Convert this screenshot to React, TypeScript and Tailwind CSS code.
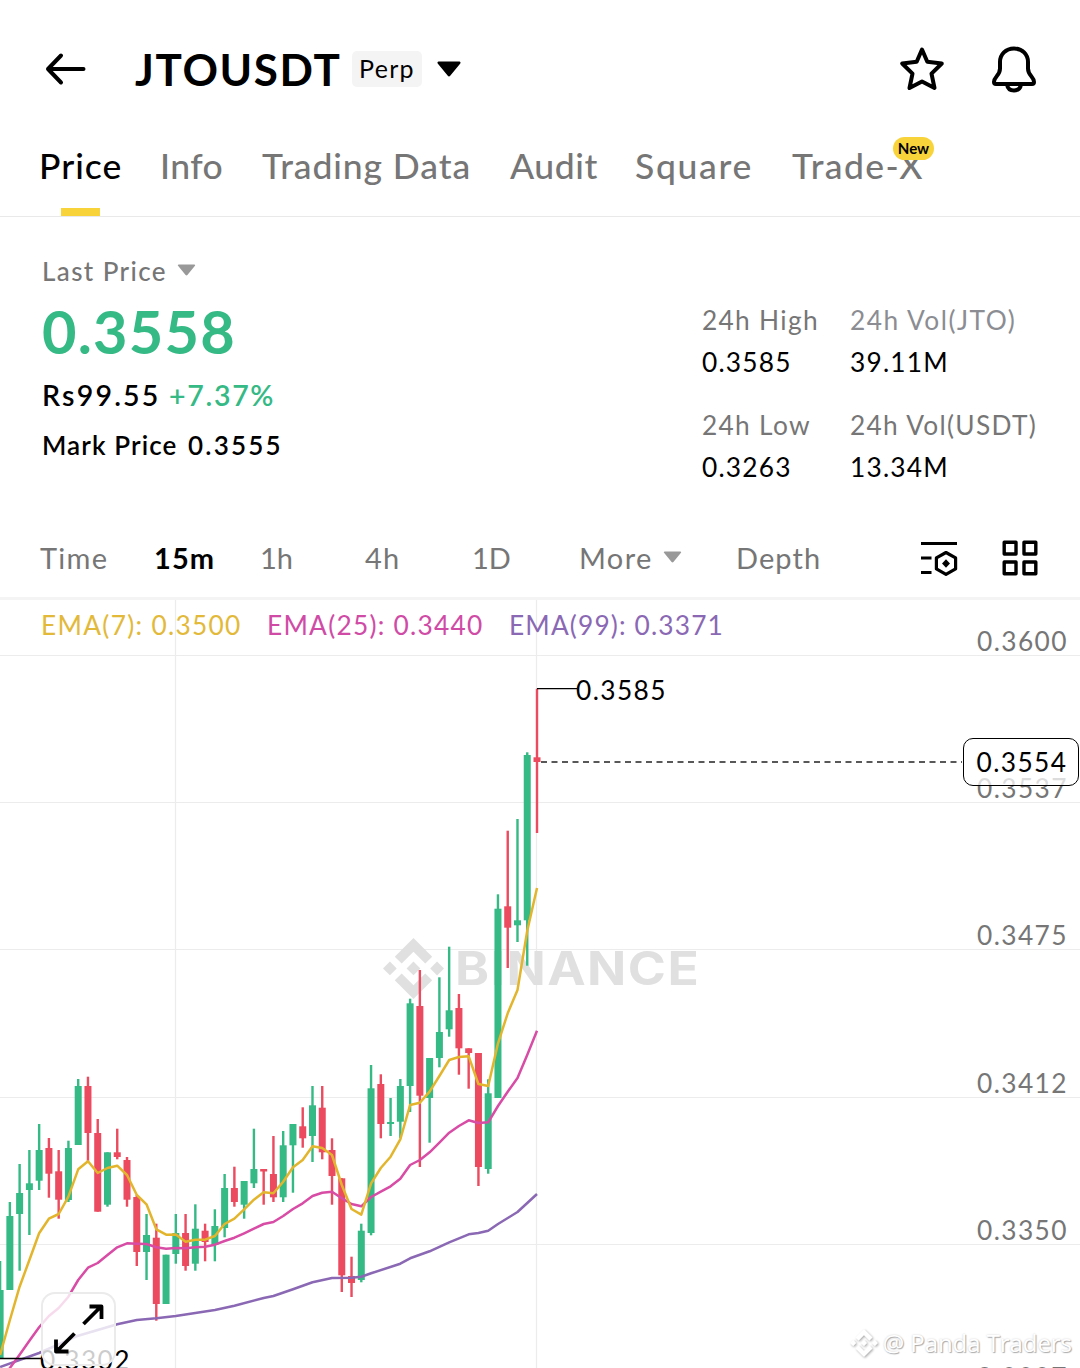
import React from 'react';
import { SiBinance } from 'react-icons/si';

const GREEN = '#35b985';
const RED = '#eb4a5f';
const STEP = 9.762;
const TOP = 600;

/* top wick, body top, body bottom, bottom wick, rising */
const candles: [number, number, number, number, boolean][] = [
  [1261, 1290, 1358, 1358, true],
  [1202, 1216, 1290, 1290, true],
  [1164, 1193, 1214, 1270.7, true],
  [1150, 1183.3, 1190, 1235, true],
  [1124, 1150, 1180.7, 1190, true],
  [1138, 1148, 1173.7, 1197.7, false],
  [1150, 1171.3, 1199.7, 1218.7, false],
  [1140.7, 1148, 1200, 1202, true],
  [1079, 1086, 1145, 1145, true],
  [1076.7, 1086, 1133, 1161, false],
  [1119, 1133, 1211.7, 1211.7, false],
  [1152.3, 1152.3, 1204.7, 1206.7, true],
  [1128.7, 1152.3, 1157, 1159.3, false],
  [1157, 1160, 1199.7, 1206.7, false],
  [1195, 1197, 1252, 1266, false],
  [1214, 1235, 1252, 1280, true],
  [1223.7, 1237.7, 1304, 1320.7, false],
  [1254.7, 1254.7, 1304, 1304, true],
  [1214, 1233, 1254, 1263.7, true],
  [1214, 1233, 1266, 1270.7, false],
  [1204.3, 1228.7, 1263.7, 1270.7, true],
  [1223.7, 1230.7, 1242, 1261.3, false],
  [1209.3, 1226, 1245, 1261.3, true],
  [1174, 1188, 1228, 1237.3, true],
  [1166.7, 1188, 1202, 1206.7, false],
  [1181, 1181, 1204.7, 1218.7, true],
  [1128.7, 1169, 1183.3, 1188, true],
  [1169, 1169, 1171.5, 1204.7, false],
  [1136, 1174, 1197.3, 1202, false],
  [1131, 1145.3, 1197.3, 1202, true],
  [1124, 1124, 1145.3, 1192.7, true],
  [1107.3, 1126.3, 1138.3, 1147.7, false],
  [1086, 1105.3, 1136, 1162, true],
  [1086, 1107.7, 1152.3, 1159.3, false],
  [1138.3, 1150, 1176, 1204.7, false],
  [1178.3, 1178.3, 1275.3, 1292, false],
  [1256.7, 1276, 1283, 1297, false],
  [1223.7, 1230.7, 1280, 1282.3, true],
  [1065, 1088.3, 1233, 1235.3, true],
  [1074.3, 1084, 1124, 1138.3, false],
  [1098, 1122, 1124, 1136, true],
  [1079, 1086, 1121.7, 1138.3, true],
  [998.7, 1003.3, 1086, 1112, true],
  [970, 1006, 1095.7, 1167, false],
  [1058, 1058, 1098, 1142.7, true],
  [977.3, 1032, 1058, 1067.3, true],
  [946.7, 1010.3, 1029.3, 1036.7, true],
  [994, 1008, 1048.3, 1074.7, false],
  [1048.3, 1048.3, 1053, 1088.7, false],
  [1053, 1053, 1167, 1186, false],
  [1079.3, 1093.3, 1169, 1173.7, true],
  [894.3, 908.7, 1098, 1098, true],
  [830.7, 906.3, 927.7, 968, false],
  [819, 920.3, 925.3, 942, true],
  [752.3, 755, 920.3, 965.7, true],
  [688.7, 757.3, 762, 833, false],
];

const ema7 = [
  1355, 1320, 1286.7, 1260, 1233.3, 1218.7, 1214, 1196.7, 1169.3, 1161.3, 1173, 1168, 1165.7, 1175, 1195, 1204.3,
  1229.3, 1234.7, 1234.5, 1241.7, 1239.7, 1239.7, 1236, 1224, 1218.7, 1209.3, 1199.7, 1192.3, 1193.3, 1181.7, 1167.3,
  1160, 1146.3, 1148, 1155, 1185, 1209, 1214.7, 1183.3, 1168, 1156.7, 1139.3, 1105, 1102.7, 1091.7, 1076, 1060, 1057,
  1056.3, 1084, 1086, 1043.3, 1013.3, 990, 931, 888,
];
const ema25 = [
  1382, 1368, 1354.7, 1340.7, 1327.3, 1316, 1308, 1296.7, 1280, 1267.7, 1263, 1255, 1247.3, 1243.3, 1243.7, 1244,
  1247.3, 1248.7, 1248, 1248.3, 1247.3, 1246.7, 1244.7, 1241, 1237.7, 1233.3, 1228.7, 1224, 1222, 1216, 1209, 1203.3,
  1196, 1192.7, 1191.7, 1198.2, 1204, 1206.3, 1197, 1191.7, 1186.3, 1178.7, 1165, 1160, 1152.3, 1142.7, 1132.7, 1126,
  1120.3, 1123, 1122.3, 1106, 1091.7, 1078, 1055, 1030.7,
];
const ema99: [number, number][] = [
  [0, 1367], [4, 1353], [8, 1335.7], [12, 1324.3], [14, 1320], [16, 1318.3], [18, 1316], [20, 1313], [22, 1310],
  [24, 1305.7], [27, 1298], [28, 1296], [30, 1289.3], [32, 1282.3], [34, 1278], [36, 1277.7], [37, 1276.7],
  [38, 1273.3], [41, 1263.7], [42, 1258.3], [44, 1251.3], [46, 1242.3], [48, 1234.3], [49, 1233], [50, 1230.7],
  [51, 1224], [53, 1212], [55, 1194],
];

const points = (list: [number, number][]) =>
  list.map(([i, y]) => `${(i * STEP + 0.1).toFixed(1)},${(y - TOP).toFixed(1)}`).join(' ');

function Caret({ className }: { className: string }) {
  return (
    <svg viewBox="0 0 24 16" className={className} fill="currentColor">
      <path d="M1.6 0.5h20.8c1 0 1.5 1.1.9 1.9L13.2 14.8c-.6.8-1.8.8-2.4 0L.7 2.4C.1 1.600.6.5 1.600.5z" />
    </svg>
  );
}

function Header() {
  return (
    <header className="flex h-[138px] items-center pl-[44px] pr-[42px]">
      <svg viewBox="0 0 44 34" className="h-[34px] w-[44px]" fill="none" stroke="#000" strokeWidth="4" strokeLinecap="round" strokeLinejoin="round">
        <path d="M17 3.500 4 17l13 13.500M4 17h35.500" />
      </svg>
      <h1 className="ml-[47px] w-[217px] text-[44px] leading-[50px] font-bold tracking-[1.6px]">JTOUSDT</h1>
      <span className="flex h-[36px] w-[70px] items-center rounded-[5px] bg-[#f4f4f4] pl-[7px] text-[25px] tracking-[1.3px]">Perp</span>
      <Caret className="ml-[15px] h-[16px] w-[24px]" />
      <svg viewBox="0 0 46 46" className="ml-auto h-[46px] w-[46px]" fill="none" stroke="#000" strokeWidth="4" strokeLinejoin="round">
        <path d="M23 3.500 28.300 15.700 42.800 17.500 32.500 27.600 35.500 42 23 35.500 10.500 42 13.500 27.600 3.200 17.500 17.700 15.700z" />
      </svg>
      <svg viewBox="0 0 48 48" className="ml-[45px] h-[48px] w-[48px]" fill="none" stroke="#000" strokeWidth="4" strokeLinejoin="round">
        <path d="M24 3.500c-8.300 0-14 6-14 13.500v6.500c0 3.500-1.200 5.300-3.300 7.700C5 33.200 4 35 4 37c0 1.300.7 2 2 2h36c1.300 0 2-.7 2-2 0-2-1-3.800-2.700-5.800-2.100-2.400-3.300-4.200-3.300-7.700V17c0-7.500-5.700-13.500-14-13.500z" />
        <path d="M17 39.500c.6 4 3.300 6 7 6s6.400-2 7-6" />
      </svg>
    </header>
  );
}

function Tabs() {
  return (
    <nav className="flex h-[79px] border-b border-[#e9e9e9] pl-[38px] text-[35.500px] leading-[56px] font-medium whitespace-nowrap text-[#767676]">
      <div className="flex w-[122px] flex-col justify-between tracking-[1px] text-black">
        <span className="pl-[1px]">Price</span>
        <span className="ml-[23px] h-[8px] w-[39px] bg-[#f8d33a]" />
      </div>
      <div className="w-[102px] tracking-[0.4px]">Info</div>
      <div className="w-[248px] tracking-[0.9px]">Trading Data</div>
      <div className="w-[125px] tracking-[0.6px]">Audit</div>
      <div className="w-[157px] tracking-[1.7px]">Square</div>
      <div className="relative tracking-[1.4px]">
        Trade-X
        <span className="absolute top-[-1px] left-[101px] flex h-[23px] w-[41px] items-center justify-center rounded-full bg-[#f8d33a] text-[15px] leading-none font-bold tracking-[0] text-black">
          New
        </span>
      </div>
    </nav>
  );
}

function Stat({ label, value, light }: { label: string; value: string; light?: boolean }) {
  return (
    <div className="flex flex-col gap-[2px] leading-[40px]">
      <span className={light ? 'tracking-[1.5px] text-[#8b8d92]' : 'tracking-[1.3px] text-[#767676]'}>{label}</span>
      <span className="tracking-[1.2px]">{value}</span>
    </div>
  );
}

function Summary() {
  return (
    <section className="flex h-[303px] justify-between whitespace-nowrap">
      <div className="flex flex-col pl-[42px]">
        <div className="mt-[38px] flex h-[32px] items-center text-[26px] font-medium tracking-[1.4px] text-[#767676]">
          Last Price
          <Caret className="ml-[10px] mb-[2px] h-[12px] w-[19px] text-[#999]" />
        </div>
        <div className="mt-[14px] h-[60px] text-[59.500px] leading-[60px] font-bold tracking-[1.2px] text-[#35b985]">0.3558</div>
        <div className="mt-[18px] flex h-[32px] items-center text-[28.5px] font-semibold">
          <span className="w-[127px] tracking-[2.200px]">Rs99.55</span>
          <span className="tracking-[1.7px] text-[#35b985]">+7.37%</span>
        </div>
        <div className="mt-[18px] flex h-[32px] items-center text-[26px] font-semibold">
          <span className="w-[146px] tracking-[1.1px]">Mark Price</span>
          <span className="tracking-[2.2px]">0.3555</span>
        </div>
      </div>
      <div className="mt-[83px] grid h-[187px] w-[378px] grid-cols-[148px_230px] content-start gap-y-[23px] text-[26.300px]">
        <Stat label="24h High" value="0.3585" />
        <Stat label="24h Vol(JTO)" value="39.11M" light />
        <Stat label="24h Low" value="0.3263" />
        <Stat label="24h Vol(USDT)" value="13.34M" />
      </div>
    </section>
  );
}

function Intervals() {
  return (
    <div className="flex h-[80px] items-center border-b-[3px] border-[#f4f4f4] pb-[2px] pl-[40px] text-[29px] whitespace-nowrap text-[#767676]">
      <span className="w-[114px] tracking-[1.3px]">Time</span>
      <span className="w-[106px] font-bold tracking-[1.1px] text-black">15m</span>
      <span className="w-[105px]">1h</span>
      <span className="w-[107px] tracking-[1.2px]">4h</span>
      <span className="w-[107px]">1D</span>
      <span className="flex w-[157px] items-center tracking-[1.37px]">
        More
        <Caret className="ml-[10px] mb-[2px] h-[12px] w-[19px] text-[#999]" />
      </span>
      <span className="w-[184px] tracking-[1.09px]">Depth</span>
      <svg viewBox="0 0 38 38" className="h-[38px] w-[38px]" fill="none" stroke="#000" strokeWidth="3.200">
        <path d="M1 4.500h36M1 19h10.500M1 33.500h10.500M26 13.500l9.600 5.400v11L26 35.400l-9.600-5.500v-11z" strokeLinejoin="round" />
        <path d="M26 20.300l4 4.200-4 4.200-4-4.200z" fill="#000" stroke="none" />
      </svg>
      <svg viewBox="0 0 36 36" className="ml-[44px] h-[36px] w-[36px]" fill="none" stroke="#000" strokeWidth="3.400" strokeLinejoin="round">
        <path d="M2.200 2.200h11.800v11.800H2.200zM22 2.200h11.800v11.800H22zM2.200 22h11.800v11.800H2.200zM22 22h11.800v11.800H22z" />
      </svg>
    </div>
  );
}

function Plot() {
  return (
    <svg viewBox="0 0 1080 768" className="absolute inset-0 h-[768px] w-[1080px]" fill="none">
      {candles.map(([hi, a, b, lo, up], i) => {
        const x = i * STEP + 0.1;
        return (
          <g key={i} fill={up ? GREEN : RED}>
            <rect x={x - 1.2} y={hi - TOP} width={2.4} height={lo - hi} />
            <rect x={x - 3.500} y={a - TOP} width={7} height={b - a} />
          </g>
        );
      })}
      <g strokeWidth="2.500" strokeLinejoin="round">
        <polyline points={points(ema99)} stroke="#8a68b4" />
        <polyline points={points(ema25.map((y, i) => [i, y]))} stroke="#d84ca6" />
        <polyline points={points(ema7.map((y, i) => [i, y]))} stroke="#e3b52d" />
      </g>
      <path d="M537 88.700h40M0 758.500h41" stroke="#000" strokeWidth="1.300" />
      <path d="M541 162h421" stroke="#222" strokeWidth="1.600" strokeDasharray="6 4.500" />
    </svg>
  );
}

function Chart() {
  return (
    <section className="relative h-[768px] overflow-hidden text-[26.300px] whitespace-nowrap">
      <svg viewBox="0 0 1080 768" className="absolute inset-0 h-[768px] w-[1080px]">
        <path d="M0 55.500h1080M0 202.500h1080M0 349.500h1080M0 497.500h1080M0 644.500h1080M175.500 0v768M536.500 0v768" stroke="#ececec" strokeWidth="1.200" />
      </svg>
      <div className="absolute top-[338px] left-[383px] flex items-center text-[#e0e0e0]">
        <SiBinance className="h-[61px] w-[61px]" />
        <span className="ml-[11px] origin-left scale-x-[1.12] font-['Inter',sans-serif] text-[46px] leading-[61px] font-bold tracking-[1.3px]">BINANCE</span>
      </div>
      <Plot />
      <div className="relative flex h-[50px] items-center pt-[1px] pl-[41px]">
        <span className="w-[226px] tracking-[1.3px] text-[#e3b93a]">EMA(7): 0.3500</span>
        <span className="w-[242px] tracking-[1.25px] text-[#d04ba6]">EMA(25): 0.3440</span>
        <span className="tracking-[1.15px] text-[#8a68b4]">EMA(99): 0.3371</span>
      </div>
      <div className="absolute top-[25px] right-0 flex w-[104px] flex-col gap-[115.200px] pl-[1px] leading-[32px] tracking-[1.4px] text-[#767676]">
        <span>0.3600</span>
        <span>0.3537</span>
        <span>0.3475</span>
        <span>0.3412</span>
        <span>0.3350</span>
        <span>0.3287</span>
      </div>
      <span className="absolute top-[74px] left-[576px] leading-[32px] tracking-[1.4px]">0.3585</span>
      <div className="absolute top-[138px] right-[1px] flex h-[48px] w-[116px] items-center rounded-[10px] border-[1.500px] border-black bg-white/75 pt-[2px] pl-[12.500px] tracking-[1.4px]">
        0.3554
      </div>
      <span className="absolute top-[744px] left-[40px] leading-[32px] tracking-[1.4px]">0.3302</span>
      <div className="absolute top-[692px] left-[41px] h-[74px] w-[75px] rounded-[14px] border-2 border-[#ebebeb] bg-white/80">
        <svg viewBox="0 0 71 70" className="h-[70px] w-[71px]" fill="none" stroke="#000" strokeWidth="3.800">
          <path d="M40.500 30 58.500 12M46.500 12.500h12v12.500M31.500 39.500 13.500 57.500M13 45.500v12h12.500" strokeLinejoin="round" />
        </svg>
      </div>
      <div className="absolute right-[8px] bottom-[8px] flex h-[34px] items-center text-white">
        <SiBinance className="h-[28px] w-[28px] drop-shadow-[1px_1px_1px_#aaa]" />
        <span className="ml-[5px] font-['Open_Sans','Noto_Sans',sans-serif] text-[24px] tracking-[-0.06px] [text-shadow:1px_1px_1px_#aaa,0_0_2px_#ccc]">
          @ Panda Traders
        </span>
      </div>
    </section>
  );
}

export default function App() {
  return (
    <main className="h-[1368px] w-[1080px] overflow-hidden bg-white font-['Lato','Liberation_Sans',sans-serif] text-black">
      <Header />
      <Tabs />
      <Summary />
      <Intervals />
      <Chart />
    </main>
  );
}
